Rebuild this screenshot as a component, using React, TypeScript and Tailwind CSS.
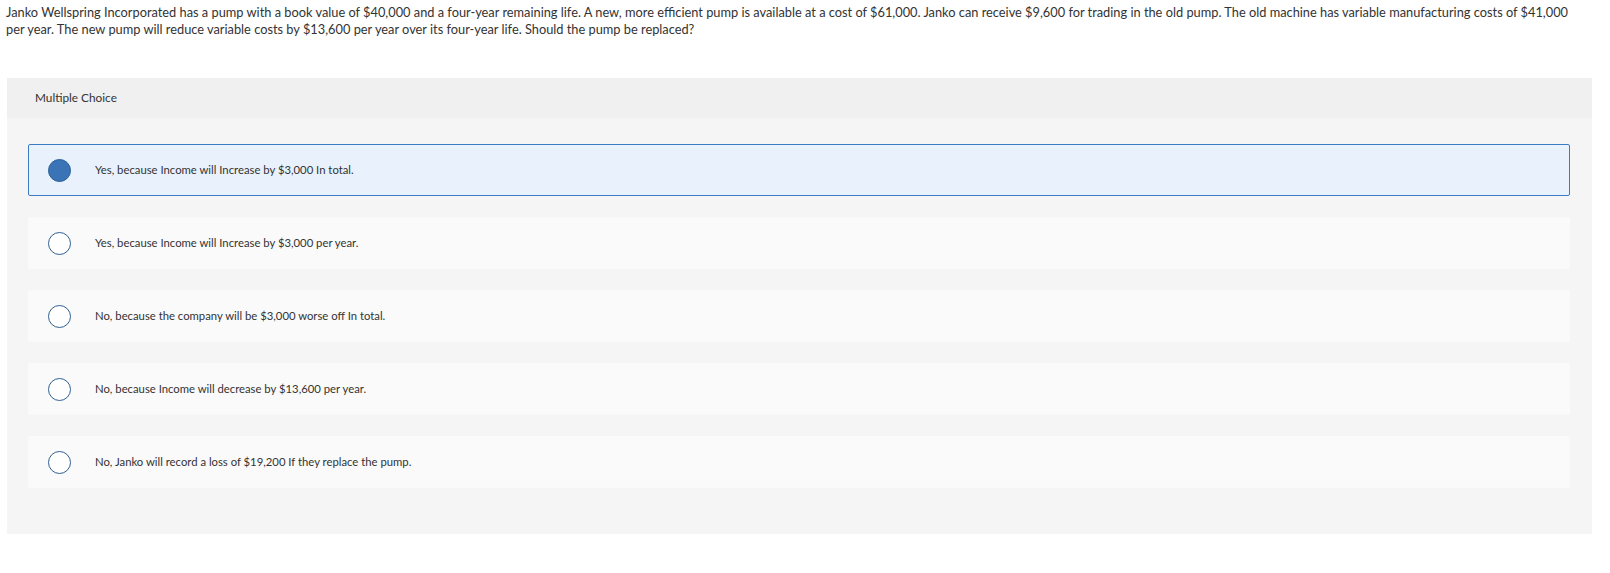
const OPTIONS = [
  "Yes, because Income will Increase by $3,000 In total.",
  "Yes, because Income will Increase by $3,000 per year.",
  "No, because the company will be $3,000 worse off In total.",
  "No, because Income will decrease by $13,600 per year.",
  "No, Janko will record a loss of $19,200 If they replace the pump.",
];

const SELECTED = 0;

export default function App() {
  return (
    <div className="w-[1610px] h-[573px] bg-white text-[#333] font-['Lato','Open_Sans',sans-serif]">
      {/* Question */}
      <p className="pl-[6px] pr-[24px] pt-[4px] text-[12.8px] leading-[17px]">
        Janko Wellspring Incorporated has a pump with a book value of $40,000 and a four-year remaining life. A new, more
        efficient pump is available at a cost of $61,000. Janko can receive $9,600 for trading in the old pump. The old
        machine has variable manufacturing costs of $41,000 per year. The new pump will reduce variable costs by $13,600
        per year over its four-year life. Should the pump be replaced?
      </p>

      {/* Multiple choice panel */}
      <div className="ml-[7px] mt-[40px] w-[1585px] bg-[#f5f5f5]">
        <div className="h-[40px] flex items-center pl-[28px] bg-[#f0f0f0] text-[11.8px] text-[#333]">
          Multiple Choice
        </div>
        <div className="flex flex-col gap-[21px] pl-[21px] pr-[22px] pt-[26px] pb-[46px]">
          {OPTIONS.map((opt, i) => {
            const selected = i === SELECTED;
            return (
              <div
                key={i}
                className={
                  selected
                    ? "h-[52px] flex items-center rounded-[2px] border border-[#3b7bc6] bg-[#e9f2fc]"
                    : "h-[52px] flex items-center rounded-[3px] border border-transparent bg-[#fafafa]"
                }
              >
                <div className="ml-[19px] mr-[24px]">
                  {selected ? (
                    <div className="w-[23px] h-[23px] rounded-full bg-[#3a74b6] border border-[#2e6099]" />
                  ) : (
                    <div className="w-[23px] h-[23px] rounded-full bg-white border-[1.5px] border-[#2f5f90]" />
                  )}
                </div>
                <span className="text-[11.3px] text-[#333]">{opt}</span>
              </div>
            );
          })}
        </div>
      </div>
    </div>
  );
}
